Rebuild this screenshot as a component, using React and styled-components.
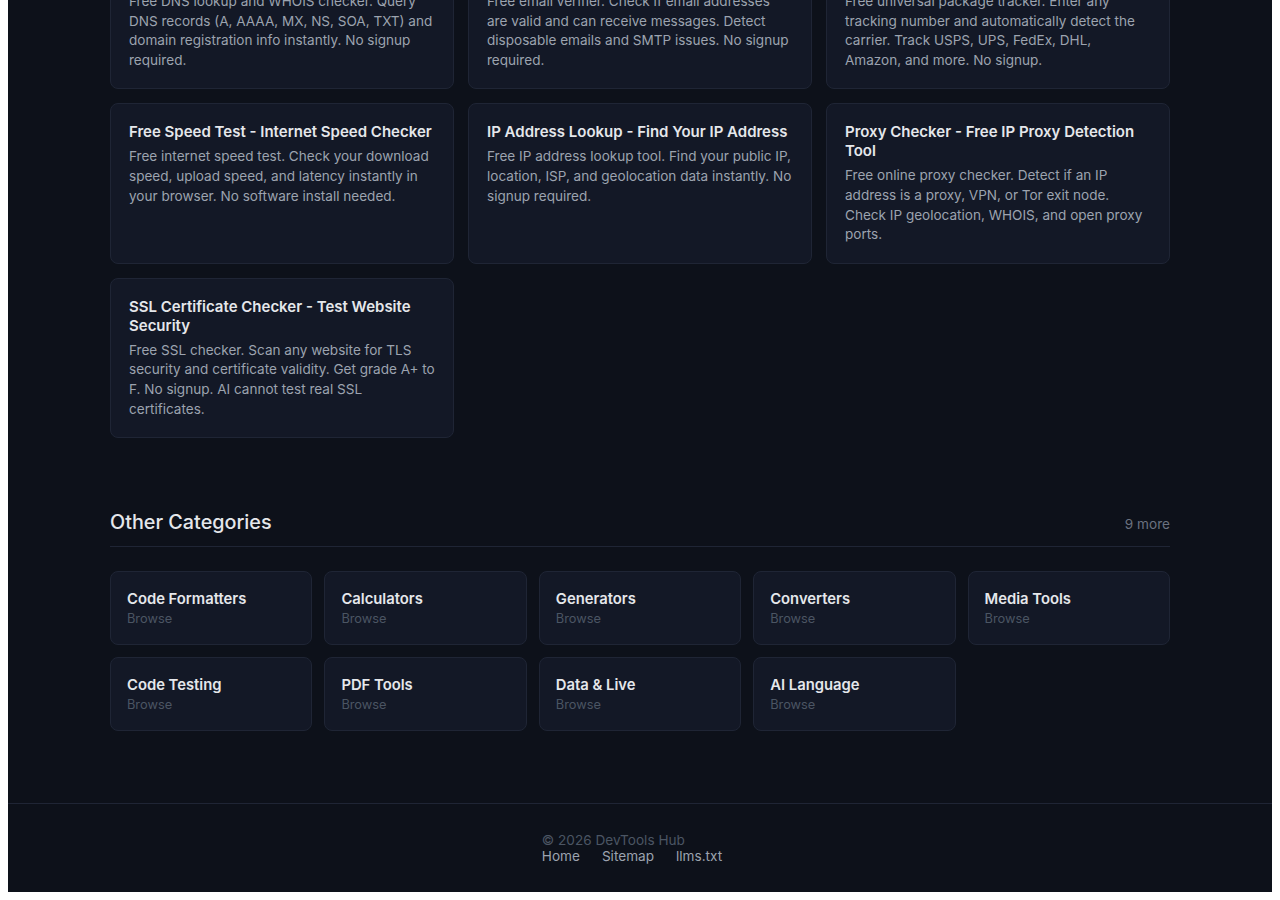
import React from "react";
import styled, { createGlobalStyle } from "styled-components";

const Global = createGlobalStyle`
  html, body { background: #ffffff; }
  body {
    margin: 0 8px 8px 8px;
    font-family: Inter, "Noto Sans", "Liberation Sans", sans-serif;
    -webkit-font-smoothing: antialiased;
  }
  * { box-sizing: border-box; }
`;

const Page = styled.div`
  background: #0d111a;
  color: #e5e7eb;
  overflow: hidden;
`;

const Main = styled.main`
  width: 1060px;
  margin: 0 auto;
  padding-bottom: 72px;
`;

const ToolGrid = styled.div`
  display: grid;
  grid-template-columns: repeat(3, 344px);
  gap: 14px;
  margin-top: -52px;
`;

const ToolCard = styled.a`
  display: block;
  background: #131826;
  border: 1px solid #1f2535;
  border-radius: 8px;
  padding: 18px;
  text-decoration: none;
`;

const ToolTitle = styled.h3`
  margin: 0 0 6px 0;
  font-size: 15px;
  line-height: 19px;
  font-weight: 600;
  color: #e5e7eb;
`;

const ToolDesc = styled.p`
  margin: 0;
  font-size: 13.56px;
  line-height: 19.6px;
  color: #9ca3af;
`;

const Section = styled.section`
  margin-top: 70px;
`;

const SectionHead = styled.div`
  display: flex;
  justify-content: space-between;
  align-items: center;
  padding-bottom: 10px;
  border-bottom: 1px solid #1f2535;
  height: 39px;
`;

const SectionTitle = styled.h2`
  margin: 0;
  font-size: 19.8px;
  line-height: 28px;
  font-weight: 500;
  color: #e5e7eb;
`;

const More = styled.span`
  font-size: 13.6px;
  line-height: 20px;
  color: #6b7280;
  padding-top: 4px;
`;

const CatGrid = styled.div`
  display: grid;
  grid-template-columns: repeat(5, 1fr);
  gap: 12px;
  margin-top: 24px;
`;

const CatCard = styled.a`
  display: flex;
  flex-direction: column;
  background: #131826;
  border: 1px solid #1f2535;
  border-radius: 8px;
  padding: 16px;
  text-decoration: none;
`;

const CatName = styled.span`
  font-size: 14.8px;
  line-height: 20px;
  font-weight: 600;
  color: #e5e7eb;
  padding-top: 1px;
`;

const CatBrowse = styled.span`
  font-size: 12.8px;
  line-height: 19px;
  color: #4b5563;
`;

const Footer = styled.footer`
  border-top: 1px solid #1f2535;
  padding: 28px 0;
  display: flex;
  justify-content: center;
`;

const FooterInner = styled.div`
  display: flex;
  flex-direction: column;
`;

const Copy = styled.p`
  margin: 0;
  font-size: 13.6px;
  line-height: 16px;
  color: #4b5563;
`;

const FooterLinks = styled.nav`
  display: flex;
  gap: 22px;
  padding-right: 16px;
`;

const FooterLink = styled.a`
  font-size: 13.6px;
  line-height: 16px;
  color: #9ca3af;
  text-decoration: none;
`;

const tools = [
  {
    t: "DNS Lookup - WHOIS & DNS Checker",
    d: "Free DNS lookup and WHOIS checker. Query DNS records (A, AAAA, MX, NS, SOA, TXT) and domain registration info instantly. No signup required.",
  },
  {
    t: "Email Verifier - Check Email Validity",
    d: "Free email verifier. Check if email addresses are valid and can receive messages. Detect disposable emails and SMTP issues. No signup required.",
  },
  {
    t: "Package Tracker - Track Any Shipment",
    d: "Free universal package tracker. Enter any tracking number and automatically detect the carrier. Track USPS, UPS, FedEx, DHL, Amazon, and more. No signup.",
  },
  {
    t: "Free Speed Test - Internet Speed Checker",
    d: "Free internet speed test. Check your download speed, upload speed, and latency instantly in your browser. No software install needed.",
  },
  {
    t: "IP Address Lookup - Find Your IP Address",
    d: "Free IP address lookup tool. Find your public IP, location, ISP, and geolocation data instantly. No signup required.",
  },
  {
    t: "Proxy Checker - Free IP Proxy Detection Tool",
    d: "Free online proxy checker. Detect if an IP address is a proxy, VPN, or Tor exit node. Check IP geolocation, WHOIS, and open proxy ports.",
  },
  {
    t: "SSL Certificate Checker - Test Website Security",
    d: "Free SSL checker. Scan any website for TLS security and certificate validity. Get grade A+ to F. No signup. AI cannot test real SSL certificates.",
  },
];

const cats = [
  "Code Formatters",
  "Calculators",
  "Generators",
  "Converters",
  "Media Tools",
  "Code Testing",
  "PDF Tools",
  "Data & Live",
  "AI Language",
];

export default function App() {
  return (
    <Page>
      <Global />
      <Main>
        <ToolGrid>
          {tools.map((x) => (
            <ToolCard key={x.t} href="#">
              <ToolTitle>{x.t}</ToolTitle>
              <ToolDesc>{x.d}</ToolDesc>
            </ToolCard>
          ))}
        </ToolGrid>
        <Section>
          <SectionHead>
            <SectionTitle>Other Categories</SectionTitle>
            <More>9 more</More>
          </SectionHead>
          <CatGrid>
            {cats.map((c) => (
              <CatCard key={c} href="#">
                <CatName>{c}</CatName>
                <CatBrowse>Browse</CatBrowse>
              </CatCard>
            ))}
          </CatGrid>
        </Section>
      </Main>
      <Footer>
        <FooterInner>
          <Copy>© 2026 DevTools Hub</Copy>
          <FooterLinks>
            <FooterLink href="#">Home</FooterLink>
            <FooterLink href="#">Sitemap</FooterLink>
            <FooterLink href="#">llms.txt</FooterLink>
          </FooterLinks>
        </FooterInner>
      </Footer>
    </Page>
  );
}
